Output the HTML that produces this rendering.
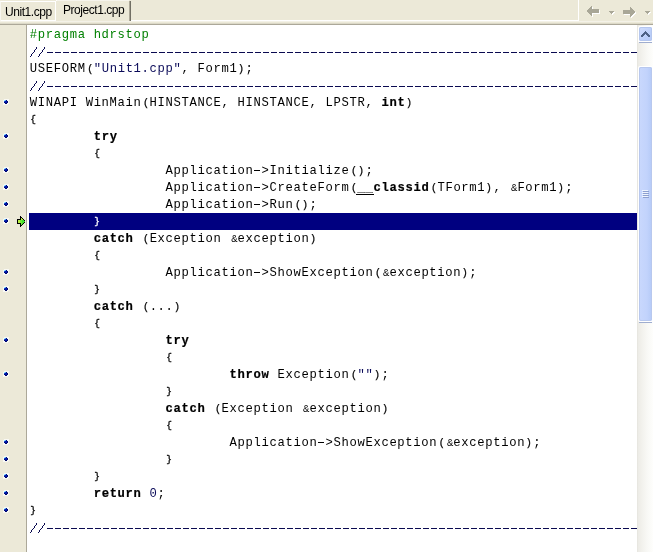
<!DOCTYPE html>
<html><head><meta charset="utf-8">
<style>
html,body{margin:0;padding:0;}
body{width:653px;height:552px;overflow:hidden;position:relative;background:#ECE9D8;font-family:"Liberation Sans",sans-serif;}
.abs{position:absolute;}
.tt{will-change:transform;font-size:12px;letter-spacing:-0.45px;line-height:13px;color:#000;white-space:nowrap;}
#tabbar{left:0;top:0;width:653px;height:24px;background:#ECE9D8;}
#tabline{left:0;top:24px;width:653px;height:1px;background:#ACA899;}
#gutter{left:0;top:25px;width:26px;height:527px;background:#ECE9D8;}
#gline{left:26px;top:25px;width:1px;height:527px;background:#ACA899;}
#editor{left:27px;top:25px;width:610px;height:527px;background:#fff;overflow:hidden;}
#code{will-change:transform;left:2px;top:1px;width:700px;font-family:"Liberation Mono",monospace;font-size:12.2px;letter-spacing:0.679px;line-height:19px;white-space:pre;color:#000;}
.ln{height:17px;position:relative;padding-left:0.7px;}
.cm .dash{position:absolute;left:18px;top:9px;width:600px;height:1px;background:repeating-linear-gradient(to right,#0A0A50 0 6px,transparent 6px 8px);}
.k{font-weight:bold;-webkit-text-stroke:0.2px #000;}
.pl,.pr{-webkit-text-stroke:0.25px currentColor;font-size:10px;letter-spacing:2px;position:relative;top:-0.5px;}
.pl{left:1.5px;}
.pr{left:0.5px;}
.br{-webkit-text-stroke:0.3px currentColor;font-size:9.5px;letter-spacing:2.3px;position:relative;left:0.6px;top:-1px;}
.s{color:#0A0A58;}
.c{color:#000080;}
.p{color:#008000;}
.hl{background:#000080;color:#fff;}
.tr{color:transparent;}
.hy{position:absolute;top:8px;width:6px;height:1px;background:#000;}
.us{position:absolute;top:15px;width:10px;height:1px;background:#000;}
.am{font-size:10.6px;letter-spacing:1.64px;position:relative;left:1.6px;}
.dot{position:absolute;left:4px;width:4px;height:4px;}
#sb{left:637px;top:25px;width:16px;height:527px;background:linear-gradient(to right,#E5E4DE 0px,#EDECE7 1.5px,#F1F0EB 4px,#F8F8F5 10px,#FEFEFC 16px);}
</style></head><body>
<div id="tabbar" class="abs">
 <div class="abs" style="left:0;top:20px;width:579px;height:1px;background:#fff"></div>
 <div class="abs" style="left:578px;top:0;width:1px;height:21px;background:#fff"></div>
 <div class="abs" style="left:0;top:21px;width:653px;height:1px;background:#F4F2E8"></div>
 <div class="abs" style="left:0;top:23px;width:653px;height:1px;background:#DCD9C8"></div>
 <div class="abs" id="t1" style="left:0;top:1px;width:55px;height:19px;border-top:1px solid #fff;border-right:1px solid #fff;border-left:1px solid #F7F6EF;box-sizing:border-box;width:56px;height:20px"></div>
 <div class="abs" id="t2" style="left:56px;top:0;width:73px;height:21px;background:#ECE9D8;border-top:1px solid #F6F4EC;box-sizing:border-box"></div>
 <div class="abs" style="left:56px;top:0;width:1px;height:1px;background:#fff"></div>
 <div class="abs" style="left:129px;top:1px;width:1px;height:20px;background:#ACA899"></div>
 <div class="abs" style="left:130px;top:1px;width:1px;height:20px;background:#716F64"></div>
 <svg class="abs" style="left:580px;top:2px" width="73" height="18" shape-rendering="crispEdges"><g fill="#FFFFFF"><rect x="12" y="5" width="1" height="10"/><rect x="11" y="6" width="1" height="8"/><rect x="10" y="7" width="1" height="6"/><rect x="9" y="8" width="1" height="4"/><rect x="8" y="9" width="1" height="2"/><rect x="13" y="8" width="7" height="4"/><rect x="44" y="9" width="7" height="4"/><rect x="51" y="6" width="1" height="10"/><rect x="52" y="7" width="1" height="8"/><rect x="53" y="8" width="1" height="6"/><rect x="54" y="9" width="1" height="4"/><rect x="55" y="10" width="1" height="2"/><rect x="30" y="10" width="5" height="1"/><rect x="31" y="11" width="3" height="1"/><rect x="32" y="12" width="1" height="1"/><rect x="66" y="10" width="5" height="1"/><rect x="67" y="11" width="3" height="1"/><rect x="68" y="12" width="1" height="1"/></g><g fill="#A9A797"><rect x="11" y="4" width="1" height="10"/><rect x="10" y="5" width="1" height="8"/><rect x="9" y="6" width="1" height="6"/><rect x="8" y="7" width="1" height="4"/><rect x="7" y="8" width="1" height="2"/><rect x="12" y="7" width="7" height="4"/><rect x="43" y="8" width="7" height="4"/><rect x="50" y="5" width="1" height="10"/><rect x="51" y="6" width="1" height="8"/><rect x="52" y="7" width="1" height="6"/><rect x="53" y="8" width="1" height="4"/><rect x="54" y="9" width="1" height="2"/><rect x="29" y="9" width="5" height="1"/><rect x="30" y="10" width="3" height="1"/><rect x="31" y="11" width="1" height="1"/><rect x="65" y="9" width="5" height="1"/><rect x="66" y="10" width="3" height="1"/><rect x="67" y="11" width="1" height="1"/></g></svg>
 <div class="abs tt" style="left:5px;top:6px">Unit1.cpp</div>
 <div class="abs tt" style="left:63px;top:4px">Project1.cpp</div>
</div>
<div id="tabline" class="abs"></div>
<div id="gutter" class="abs"></div>
<svg class="abs" style="left:3px;top:99px" width="6" height="6" shape-rendering="crispEdges"><rect x="0" y="0" width="6" height="6" fill="#F8F8F4" rx="2"/><rect x="1" y="1" width="1" height="1" fill="#B0ECFF"/><rect x="2" y="1" width="1" height="1" fill="#58B0F0"/><rect x="3" y="1" width="1" height="1" fill="#000C80"/><rect x="1" y="2" width="1" height="1" fill="#1850C8"/><rect x="2" y="2" width="2" height="2" fill="#0014A8"/><rect x="4" y="2" width="1" height="2" fill="#000868"/><rect x="1" y="3" width="1" height="1" fill="#000C78"/><rect x="2" y="4" width="2" height="1" fill="#000868"/></svg><svg class="abs" style="left:3px;top:133px" width="6" height="6" shape-rendering="crispEdges"><rect x="0" y="0" width="6" height="6" fill="#F8F8F4" rx="2"/><rect x="1" y="1" width="1" height="1" fill="#B0ECFF"/><rect x="2" y="1" width="1" height="1" fill="#58B0F0"/><rect x="3" y="1" width="1" height="1" fill="#000C80"/><rect x="1" y="2" width="1" height="1" fill="#1850C8"/><rect x="2" y="2" width="2" height="2" fill="#0014A8"/><rect x="4" y="2" width="1" height="2" fill="#000868"/><rect x="1" y="3" width="1" height="1" fill="#000C78"/><rect x="2" y="4" width="2" height="1" fill="#000868"/></svg><svg class="abs" style="left:3px;top:167px" width="6" height="6" shape-rendering="crispEdges"><rect x="0" y="0" width="6" height="6" fill="#F8F8F4" rx="2"/><rect x="1" y="1" width="1" height="1" fill="#B0ECFF"/><rect x="2" y="1" width="1" height="1" fill="#58B0F0"/><rect x="3" y="1" width="1" height="1" fill="#000C80"/><rect x="1" y="2" width="1" height="1" fill="#1850C8"/><rect x="2" y="2" width="2" height="2" fill="#0014A8"/><rect x="4" y="2" width="1" height="2" fill="#000868"/><rect x="1" y="3" width="1" height="1" fill="#000C78"/><rect x="2" y="4" width="2" height="1" fill="#000868"/></svg><svg class="abs" style="left:3px;top:184px" width="6" height="6" shape-rendering="crispEdges"><rect x="0" y="0" width="6" height="6" fill="#F8F8F4" rx="2"/><rect x="1" y="1" width="1" height="1" fill="#B0ECFF"/><rect x="2" y="1" width="1" height="1" fill="#58B0F0"/><rect x="3" y="1" width="1" height="1" fill="#000C80"/><rect x="1" y="2" width="1" height="1" fill="#1850C8"/><rect x="2" y="2" width="2" height="2" fill="#0014A8"/><rect x="4" y="2" width="1" height="2" fill="#000868"/><rect x="1" y="3" width="1" height="1" fill="#000C78"/><rect x="2" y="4" width="2" height="1" fill="#000868"/></svg><svg class="abs" style="left:3px;top:201px" width="6" height="6" shape-rendering="crispEdges"><rect x="0" y="0" width="6" height="6" fill="#F8F8F4" rx="2"/><rect x="1" y="1" width="1" height="1" fill="#B0ECFF"/><rect x="2" y="1" width="1" height="1" fill="#58B0F0"/><rect x="3" y="1" width="1" height="1" fill="#000C80"/><rect x="1" y="2" width="1" height="1" fill="#1850C8"/><rect x="2" y="2" width="2" height="2" fill="#0014A8"/><rect x="4" y="2" width="1" height="2" fill="#000868"/><rect x="1" y="3" width="1" height="1" fill="#000C78"/><rect x="2" y="4" width="2" height="1" fill="#000868"/></svg><svg class="abs" style="left:3px;top:218px" width="6" height="6" shape-rendering="crispEdges"><rect x="0" y="0" width="6" height="6" fill="#F8F8F4" rx="2"/><rect x="1" y="1" width="1" height="1" fill="#B0ECFF"/><rect x="2" y="1" width="1" height="1" fill="#58B0F0"/><rect x="3" y="1" width="1" height="1" fill="#000C80"/><rect x="1" y="2" width="1" height="1" fill="#1850C8"/><rect x="2" y="2" width="2" height="2" fill="#0014A8"/><rect x="4" y="2" width="1" height="2" fill="#000868"/><rect x="1" y="3" width="1" height="1" fill="#000C78"/><rect x="2" y="4" width="2" height="1" fill="#000868"/></svg><svg class="abs" style="left:3px;top:269px" width="6" height="6" shape-rendering="crispEdges"><rect x="0" y="0" width="6" height="6" fill="#F8F8F4" rx="2"/><rect x="1" y="1" width="1" height="1" fill="#B0ECFF"/><rect x="2" y="1" width="1" height="1" fill="#58B0F0"/><rect x="3" y="1" width="1" height="1" fill="#000C80"/><rect x="1" y="2" width="1" height="1" fill="#1850C8"/><rect x="2" y="2" width="2" height="2" fill="#0014A8"/><rect x="4" y="2" width="1" height="2" fill="#000868"/><rect x="1" y="3" width="1" height="1" fill="#000C78"/><rect x="2" y="4" width="2" height="1" fill="#000868"/></svg><svg class="abs" style="left:3px;top:286px" width="6" height="6" shape-rendering="crispEdges"><rect x="0" y="0" width="6" height="6" fill="#F8F8F4" rx="2"/><rect x="1" y="1" width="1" height="1" fill="#B0ECFF"/><rect x="2" y="1" width="1" height="1" fill="#58B0F0"/><rect x="3" y="1" width="1" height="1" fill="#000C80"/><rect x="1" y="2" width="1" height="1" fill="#1850C8"/><rect x="2" y="2" width="2" height="2" fill="#0014A8"/><rect x="4" y="2" width="1" height="2" fill="#000868"/><rect x="1" y="3" width="1" height="1" fill="#000C78"/><rect x="2" y="4" width="2" height="1" fill="#000868"/></svg><svg class="abs" style="left:3px;top:337px" width="6" height="6" shape-rendering="crispEdges"><rect x="0" y="0" width="6" height="6" fill="#F8F8F4" rx="2"/><rect x="1" y="1" width="1" height="1" fill="#B0ECFF"/><rect x="2" y="1" width="1" height="1" fill="#58B0F0"/><rect x="3" y="1" width="1" height="1" fill="#000C80"/><rect x="1" y="2" width="1" height="1" fill="#1850C8"/><rect x="2" y="2" width="2" height="2" fill="#0014A8"/><rect x="4" y="2" width="1" height="2" fill="#000868"/><rect x="1" y="3" width="1" height="1" fill="#000C78"/><rect x="2" y="4" width="2" height="1" fill="#000868"/></svg><svg class="abs" style="left:3px;top:371px" width="6" height="6" shape-rendering="crispEdges"><rect x="0" y="0" width="6" height="6" fill="#F8F8F4" rx="2"/><rect x="1" y="1" width="1" height="1" fill="#B0ECFF"/><rect x="2" y="1" width="1" height="1" fill="#58B0F0"/><rect x="3" y="1" width="1" height="1" fill="#000C80"/><rect x="1" y="2" width="1" height="1" fill="#1850C8"/><rect x="2" y="2" width="2" height="2" fill="#0014A8"/><rect x="4" y="2" width="1" height="2" fill="#000868"/><rect x="1" y="3" width="1" height="1" fill="#000C78"/><rect x="2" y="4" width="2" height="1" fill="#000868"/></svg><svg class="abs" style="left:3px;top:439px" width="6" height="6" shape-rendering="crispEdges"><rect x="0" y="0" width="6" height="6" fill="#F8F8F4" rx="2"/><rect x="1" y="1" width="1" height="1" fill="#B0ECFF"/><rect x="2" y="1" width="1" height="1" fill="#58B0F0"/><rect x="3" y="1" width="1" height="1" fill="#000C80"/><rect x="1" y="2" width="1" height="1" fill="#1850C8"/><rect x="2" y="2" width="2" height="2" fill="#0014A8"/><rect x="4" y="2" width="1" height="2" fill="#000868"/><rect x="1" y="3" width="1" height="1" fill="#000C78"/><rect x="2" y="4" width="2" height="1" fill="#000868"/></svg><svg class="abs" style="left:3px;top:456px" width="6" height="6" shape-rendering="crispEdges"><rect x="0" y="0" width="6" height="6" fill="#F8F8F4" rx="2"/><rect x="1" y="1" width="1" height="1" fill="#B0ECFF"/><rect x="2" y="1" width="1" height="1" fill="#58B0F0"/><rect x="3" y="1" width="1" height="1" fill="#000C80"/><rect x="1" y="2" width="1" height="1" fill="#1850C8"/><rect x="2" y="2" width="2" height="2" fill="#0014A8"/><rect x="4" y="2" width="1" height="2" fill="#000868"/><rect x="1" y="3" width="1" height="1" fill="#000C78"/><rect x="2" y="4" width="2" height="1" fill="#000868"/></svg><svg class="abs" style="left:3px;top:473px" width="6" height="6" shape-rendering="crispEdges"><rect x="0" y="0" width="6" height="6" fill="#F8F8F4" rx="2"/><rect x="1" y="1" width="1" height="1" fill="#B0ECFF"/><rect x="2" y="1" width="1" height="1" fill="#58B0F0"/><rect x="3" y="1" width="1" height="1" fill="#000C80"/><rect x="1" y="2" width="1" height="1" fill="#1850C8"/><rect x="2" y="2" width="2" height="2" fill="#0014A8"/><rect x="4" y="2" width="1" height="2" fill="#000868"/><rect x="1" y="3" width="1" height="1" fill="#000C78"/><rect x="2" y="4" width="2" height="1" fill="#000868"/></svg><svg class="abs" style="left:3px;top:490px" width="6" height="6" shape-rendering="crispEdges"><rect x="0" y="0" width="6" height="6" fill="#F8F8F4" rx="2"/><rect x="1" y="1" width="1" height="1" fill="#B0ECFF"/><rect x="2" y="1" width="1" height="1" fill="#58B0F0"/><rect x="3" y="1" width="1" height="1" fill="#000C80"/><rect x="1" y="2" width="1" height="1" fill="#1850C8"/><rect x="2" y="2" width="2" height="2" fill="#0014A8"/><rect x="4" y="2" width="1" height="2" fill="#000868"/><rect x="1" y="3" width="1" height="1" fill="#000C78"/><rect x="2" y="4" width="2" height="1" fill="#000868"/></svg><svg class="abs" style="left:3px;top:507px" width="6" height="6" shape-rendering="crispEdges"><rect x="0" y="0" width="6" height="6" fill="#F8F8F4" rx="2"/><rect x="1" y="1" width="1" height="1" fill="#B0ECFF"/><rect x="2" y="1" width="1" height="1" fill="#58B0F0"/><rect x="3" y="1" width="1" height="1" fill="#000C80"/><rect x="1" y="2" width="1" height="1" fill="#1850C8"/><rect x="2" y="2" width="2" height="2" fill="#0014A8"/><rect x="4" y="2" width="1" height="2" fill="#000868"/><rect x="1" y="3" width="1" height="1" fill="#000C78"/><rect x="2" y="4" width="2" height="1" fill="#000868"/></svg>
<svg class="abs" style="left:16px;top:214px" width="10" height="14" shape-rendering="crispEdges"><rect x="5" y="4" width="1" height="1" fill="#B8F040"/><rect x="5" y="5" width="1" height="1" fill="#B8F040"/><rect x="6" y="5" width="1" height="1" fill="#B8F040"/><rect x="2" y="6" width="1" height="1" fill="#B8F040"/><rect x="3" y="6" width="1" height="1" fill="#B8F040"/><rect x="4" y="6" width="1" height="1" fill="#70E838"/><rect x="5" y="6" width="1" height="1" fill="#70E838"/><rect x="6" y="6" width="1" height="1" fill="#40E030"/><rect x="7" y="6" width="1" height="1" fill="#40E030"/><rect x="2" y="7" width="1" height="1" fill="#B8F040"/><rect x="3" y="7" width="1" height="1" fill="#B8F040"/><rect x="4" y="7" width="1" height="1" fill="#70E838"/><rect x="5" y="7" width="1" height="1" fill="#70E838"/><rect x="6" y="7" width="1" height="1" fill="#40E030"/><rect x="7" y="7" width="1" height="1" fill="#40E030"/><rect x="8" y="7" width="1" height="1" fill="#40E030"/><rect x="2" y="8" width="1" height="1" fill="#B8F040"/><rect x="3" y="8" width="1" height="1" fill="#B8F040"/><rect x="4" y="8" width="1" height="1" fill="#70E838"/><rect x="5" y="8" width="1" height="1" fill="#70E838"/><rect x="6" y="8" width="1" height="1" fill="#40E030"/><rect x="7" y="8" width="1" height="1" fill="#40E030"/><rect x="5" y="9" width="1" height="1" fill="#70E838"/><rect x="6" y="9" width="1" height="1" fill="#40E030"/><rect x="5" y="10" width="1" height="1" fill="#70E838"/><rect x="4" y="2" width="1" height="1" fill="#000"/><rect x="4" y="3" width="1" height="1" fill="#000"/><rect x="5" y="3" width="1" height="1" fill="#000"/><rect x="4" y="4" width="1" height="1" fill="#000"/><rect x="6" y="4" width="1" height="1" fill="#000"/><rect x="1" y="5" width="1" height="1" fill="#000"/><rect x="2" y="5" width="1" height="1" fill="#000"/><rect x="3" y="5" width="1" height="1" fill="#000"/><rect x="4" y="5" width="1" height="1" fill="#000"/><rect x="7" y="5" width="1" height="1" fill="#000"/><rect x="1" y="6" width="1" height="1" fill="#000"/><rect x="8" y="6" width="1" height="1" fill="#000"/><rect x="1" y="7" width="1" height="1" fill="#000"/><rect x="1" y="8" width="1" height="1" fill="#000"/><rect x="8" y="8" width="1" height="1" fill="#000"/><rect x="1" y="9" width="1" height="1" fill="#000"/><rect x="2" y="9" width="1" height="1" fill="#000"/><rect x="3" y="9" width="1" height="1" fill="#000"/><rect x="4" y="9" width="1" height="1" fill="#000"/><rect x="7" y="9" width="1" height="1" fill="#000"/><rect x="4" y="10" width="1" height="1" fill="#000"/><rect x="6" y="10" width="1" height="1" fill="#000"/><rect x="4" y="11" width="1" height="1" fill="#000"/><rect x="5" y="11" width="1" height="1" fill="#000"/><rect x="4" y="12" width="1" height="1" fill="#000"/></svg>
<div id="gline" class="abs"></div>
<div id="editor" class="abs">
<div id="code" class="abs"><div class="ln"><span class="p">#pragma hdrstop</span></div><div class="ln cm"><svg class="abs" style="left:0;top:0" width="16" height="17" fill="#0A0A50" shape-rendering="crispEdges"><rect x="7" y="4" width="1" height="2"/><rect x="6" y="6" width="1" height="1"/><rect x="5" y="7" width="1" height="2"/><rect x="4" y="9" width="1" height="1"/><rect x="3" y="10" width="1" height="1"/><rect x="2" y="11" width="1" height="2"/><rect x="1" y="13" width="1" height="1"/><rect x="15" y="4" width="1" height="2"/><rect x="14" y="6" width="1" height="1"/><rect x="13" y="7" width="1" height="2"/><rect x="12" y="9" width="1" height="1"/><rect x="11" y="10" width="1" height="1"/><rect x="10" y="11" width="1" height="2"/><rect x="9" y="13" width="1" height="1"/></svg><div class="dash"></div></div><div class="ln">USEFORM<span class="pl">(</span><span class="s">"Unit1.cpp"</span>, Form1<span class="pr">)</span>;</div><div class="ln cm"><svg class="abs" style="left:0;top:0" width="16" height="17" fill="#0A0A50" shape-rendering="crispEdges"><rect x="7" y="4" width="1" height="2"/><rect x="6" y="6" width="1" height="1"/><rect x="5" y="7" width="1" height="2"/><rect x="4" y="9" width="1" height="1"/><rect x="3" y="10" width="1" height="1"/><rect x="2" y="11" width="1" height="2"/><rect x="1" y="13" width="1" height="1"/><rect x="15" y="4" width="1" height="2"/><rect x="14" y="6" width="1" height="1"/><rect x="13" y="7" width="1" height="2"/><rect x="12" y="9" width="1" height="1"/><rect x="11" y="10" width="1" height="1"/><rect x="10" y="11" width="1" height="2"/><rect x="9" y="13" width="1" height="1"/></svg><div class="dash"></div></div><div class="ln">WINAPI WinMain<span class="pl">(</span>HINSTANCE, HINSTANCE, LPSTR, <span class="k">int</span><span class="pr">)</span></div><div class="ln"><span class="br">{</span></div><div class="ln">        <span class="k">try</span></div><div class="ln">        <span class="br">{</span></div><div class="ln">                 Application<span class="tr">-</span>&gt;Initialize<span class="pl">(</span><span class="pr">)</span>;<i class="hy" style="left:225px"></i></div><div class="ln">                 Application<span class="tr">-</span>&gt;CreateForm<span class="pl">(</span><span class="k"><span class="tr">_</span><span class="tr">_</span>classid</span><span class="pl">(</span>TForm1<span class="pr">)</span>, <span class="am">&amp;</span>Form1<span class="pr">)</span>;<i class="hy" style="left:225px"></i><i class="us" style="left:327px"></i><i class="us" style="left:335px"></i></div><div class="ln">                 Application<span class="tr">-</span>&gt;Run<span class="pl">(</span><span class="pr">)</span>;<i class="hy" style="left:225px"></i></div><div class="ln hl">        <span class="br">}</span></div><div class="ln">        <span class="k">catch</span> <span class="pl">(</span>Exception <span class="am">&amp;</span>exception<span class="pr">)</span></div><div class="ln">        <span class="br">{</span></div><div class="ln">                 Application<span class="tr">-</span>&gt;ShowException<span class="pl">(</span><span class="am">&amp;</span>exception<span class="pr">)</span>;<i class="hy" style="left:225px"></i></div><div class="ln">        <span class="br">}</span></div><div class="ln">        <span class="k">catch</span> <span class="pl">(</span>...<span class="pr">)</span></div><div class="ln">        <span class="br">{</span></div><div class="ln">                 <span class="k">try</span></div><div class="ln">                 <span class="br">{</span></div><div class="ln">                         <span class="k">throw</span> Exception<span class="pl">(</span><span class="s">""</span><span class="pr">)</span>;</div><div class="ln">                 <span class="br">}</span></div><div class="ln">                 <span class="k">catch</span> <span class="pl">(</span>Exception <span class="am">&amp;</span>exception<span class="pr">)</span></div><div class="ln">                 <span class="br">{</span></div><div class="ln">                         Application<span class="tr">-</span>&gt;ShowException<span class="pl">(</span><span class="am">&amp;</span>exception<span class="pr">)</span>;<i class="hy" style="left:289px"></i></div><div class="ln">                 <span class="br">}</span></div><div class="ln">        <span class="br">}</span></div><div class="ln">        <span class="k">return</span> <span class="s">0</span>;</div><div class="ln"><span class="br">}</span></div><div class="ln cm"><svg class="abs" style="left:0;top:0" width="16" height="17" fill="#0A0A50" shape-rendering="crispEdges"><rect x="7" y="4" width="1" height="2"/><rect x="6" y="6" width="1" height="1"/><rect x="5" y="7" width="1" height="2"/><rect x="4" y="9" width="1" height="1"/><rect x="3" y="10" width="1" height="1"/><rect x="2" y="11" width="1" height="2"/><rect x="1" y="13" width="1" height="1"/><rect x="15" y="4" width="1" height="2"/><rect x="14" y="6" width="1" height="1"/><rect x="13" y="7" width="1" height="2"/><rect x="12" y="9" width="1" height="1"/><rect x="11" y="10" width="1" height="1"/><rect x="10" y="11" width="1" height="2"/><rect x="9" y="13" width="1" height="1"/></svg><div class="dash"></div></div></div></div>
</div>
<div id="sb" class="abs">
 <div class="abs" style="left:1px;top:1px;width:15px;height:17px;background:#fff;border-radius:2px"></div>
 <div class="abs" id="upb" style="left:2px;top:2px;width:13px;height:14px;border-radius:2px;background:linear-gradient(135deg,#D2DEFD,#BCCFF9 60%,#B4C8F6);box-shadow:inset 0 0 0 1px #B4C6EE"></div>
 <div class="abs" style="left:2px;top:17px;width:13px;height:1px;background:#9FADCF"></div>
 <svg class="abs" style="left:0;top:0" width="16" height="30" fill="#4D6185" shape-rendering="crispEdges"><rect x="4" y="10" width="1" height="2"/><rect x="5" y="9" width="1" height="3"/><rect x="6" y="8" width="1" height="3"/><rect x="7" y="7" width="1" height="3"/><rect x="8" y="6" width="1" height="3"/><rect x="9" y="7" width="1" height="3"/><rect x="10" y="8" width="1" height="3"/><rect x="11" y="9" width="1" height="3"/><rect x="12" y="10" width="1" height="2"/></svg>
 <div class="abs" style="left:1px;top:41px;width:15px;height:256px;background:#fff;border-radius:2px"></div>
 <div class="abs" id="thumb" style="left:2px;top:42px;width:13px;height:254px;border-radius:2px;background:linear-gradient(to right,#C9D8FD,#C2D3FC 60%,#B5CAF7);box-shadow:inset 0 0 0 1px #B8C8EE"></div>
 <div class="abs" style="left:2px;top:297px;width:13px;height:1px;background:#9FADCF"></div>
 <svg class="abs" style="left:0;top:160px" width="16" height="14">
  <rect x="5" y="5" width="6" height="1" fill="#EEF4FE"/><rect x="6" y="6" width="6" height="1" fill="#8C9FD0"/>
  <rect x="5" y="7" width="6" height="1" fill="#EEF4FE"/><rect x="6" y="8" width="6" height="1" fill="#8C9FD0"/>
  <rect x="5" y="9" width="6" height="1" fill="#EEF4FE"/><rect x="6" y="10" width="6" height="1" fill="#8C9FD0"/>
  <rect x="5" y="11" width="6" height="1" fill="#EEF4FE"/><rect x="6" y="12" width="6" height="1" fill="#8C9FD0"/>
 </svg>
</div>
</body></html>
